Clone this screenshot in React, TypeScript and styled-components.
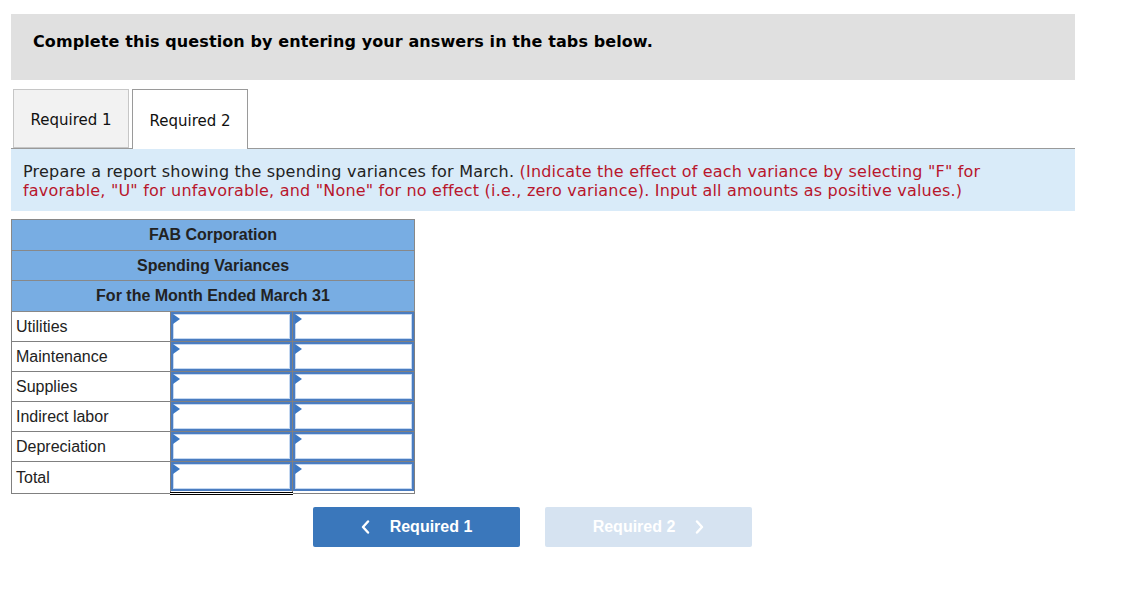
import React from "react";
import styled, { createGlobalStyle } from "styled-components";

const GlobalStyle = createGlobalStyle`
  body {
    margin: 0;
    background: #fff;
    font-family: "DejaVu Sans", Verdana, sans-serif;
    color: #000;
  }
`;

const ROWS = ["Utilities", "Maintenance", "Supplies", "Indirect labor", "Depreciation", "Total"];

function ChevronIcon({ dir }: { dir: "left" | "right" }) {
  return (
    <svg width="9" height="14" viewBox="0 0 9 14" fill="none">
      <path
        d={dir === "left" ? "M7 1.5 L2 7 L7 12.5" : "M2 1.5 L7 7 L2 12.5"}
        stroke="#fff"
        strokeWidth="2.4"
        strokeLinecap="round"
        strokeLinejoin="round"
      />
    </svg>
  );
}

function App() {
  return (
    <Page>
      <GlobalStyle />
      <Banner>Complete this question by entering your answers in the tabs below.</Banner>

      <TabRow>
        <Tab>Required 1</Tab>
        <Tab active>Required 2</Tab>
      </TabRow>

      <Instructions>
        Prepare a report showing the spending variances for March.{" "}
        <Hint>
          (Indicate the effect of each variance by selecting "F" for favorable, "U" for
          unfavorable, and "None" for no effect (i.e., zero variance). Input all amounts as
          positive values.)
        </Hint>
      </Instructions>

      <Report>
        <colgroup>
          <col style={{ width: 159 }} />
          <col style={{ width: 122 }} />
          <col style={{ width: 122 }} />
        </colgroup>
        <tbody>
          <tr>
            <HeadCell colSpan={3} h={30}>FAB Corporation</HeadCell>
          </tr>
          <tr>
            <HeadCell colSpan={3} h={29}>Spending Variances</HeadCell>
          </tr>
          <tr>
            <HeadCell colSpan={3} h={30}>For the Month Ended March 31</HeadCell>
          </tr>
          {ROWS.map((label) => {
            const total = label === "Total";
            return (
              <tr key={label}>
                <LabelCell total={total}>{label}</LabelCell>
                <InputCell total={total}>
                  <AmountBox>
                    <Marker />
                  </AmountBox>
                </InputCell>
                <InputCell>
                  <AmountBox>
                    <Marker />
                  </AmountBox>
                </InputCell>
              </tr>
            );
          })}
        </tbody>
      </Report>

      <NavRow>
        <NavButton>
          <ChevronIcon dir="left" />
          Required 1
        </NavButton>
        <NavButton disabled>
          Required 2
          <ChevronIcon dir="right" />
        </NavButton>
      </NavRow>
    </Page>
  );
}

const Page = styled.div`
  width: 1064px;
  padding: 14px 0 0 11px;
`;

const Banner = styled.div`
  height: 66px;
  box-sizing: border-box;
  background: #e0e0e0;
  padding: 18px 22px;
  font-size: 16px;
  line-height: 20px;
  font-weight: bold;
  letter-spacing: 0.1px;
  color: #000;
`;

const TabRow = styled.div`
  display: flex;
  gap: 3px;
  margin-top: 9px;
  padding-left: 2px;
  border-bottom: 1px solid #9a9a9a;
  height: 59px;
`;

const Tab = styled.div<{ active?: boolean }>`
  width: 116px;
  box-sizing: border-box;
  height: ${({ active }) => (active ? "60px" : "59px")};
  display: flex;
  align-items: center;
  justify-content: center;
  font-size: 15px;
  color: #111;
  background: ${({ active }) => (active ? "#fff" : "#f2f2f2")};
  border: 1px solid ${({ active }) => (active ? "#9a9a9a" : "#c6c6c6")};
  border-bottom: ${({ active }) => (active ? "none" : "1px solid #c6c6c6")};
  padding-top: 2px;
`;

const Instructions = styled.div`
  background: #d9ebf9;
  padding: 13px 60px 11px 12px;
  font-size: 16px;
  line-height: 19px;
  letter-spacing: 0.2px;
  color: #222;
`;

const Hint = styled.span`
  color: #b8162c;
`;

const Report = styled.table`
  margin-top: 8px;
  width: 404px;
  border-collapse: collapse;
  table-layout: fixed;
  font-family: "Liberation Sans", Arial, sans-serif;
  font-size: 16px;
  border: 1px solid #808080;
`;

const HeadCell = styled.td<{ h: number }>`
  height: ${({ h }) => h}px;
  padding: 0;
  background: #78ade3;
  border: 1px solid #888;
  text-align: center;
  font-weight: bold;
  color: #222;
`;

const LabelCell = styled.td<{ total?: boolean }>`
  height: ${({ total }) => (total ? 31 : 29)}px;
  padding: 0 4px;
  border: 1px solid #808080;
  color: #222;
  background: #fff;
`;

const InputCell = styled.td<{ total?: boolean }>`
  padding: 0;
  border: 1px solid #808080;
  border-top: ${({ total }) => (total ? "1px solid #000" : "1px solid #808080")};
  border-bottom: ${({ total }) => (total ? "3px double #000" : "1px solid #808080")};
  vertical-align: top;
`;

const AmountBox = styled.div`
  position: relative;
  height: 29px;
  box-sizing: border-box;
  border: 2px solid #4a7cc0;
  box-shadow: inset 0 0 0 1px #c4d8f1;
  background: #fff;
`;

const Marker = styled.span`
  position: absolute;
  top: 0;
  left: 0;
  width: 0;
  height: 0;
  border-top: 5px solid transparent;
  border-bottom: 5px solid transparent;
  border-left: 7px solid #3c78c3;
`;

const NavRow = styled.div`
  display: flex;
  gap: 25px;
  margin-top: 12px;
  padding-left: 302px;
`;

const NavButton = styled.button`
  width: 207px;
  height: 40px;
  display: flex;
  align-items: center;
  justify-content: center;
  gap: 20px;
  border: none;
  border-radius: 2px;
  font-family: "Liberation Sans", Arial, sans-serif;
  font-size: 16px;
  font-weight: bold;
  color: #fff;
  background: #3a77bb;
  cursor: pointer;

  &:disabled {
    background: #d6e3f1;
    cursor: default;
  }
`;

export default App;
